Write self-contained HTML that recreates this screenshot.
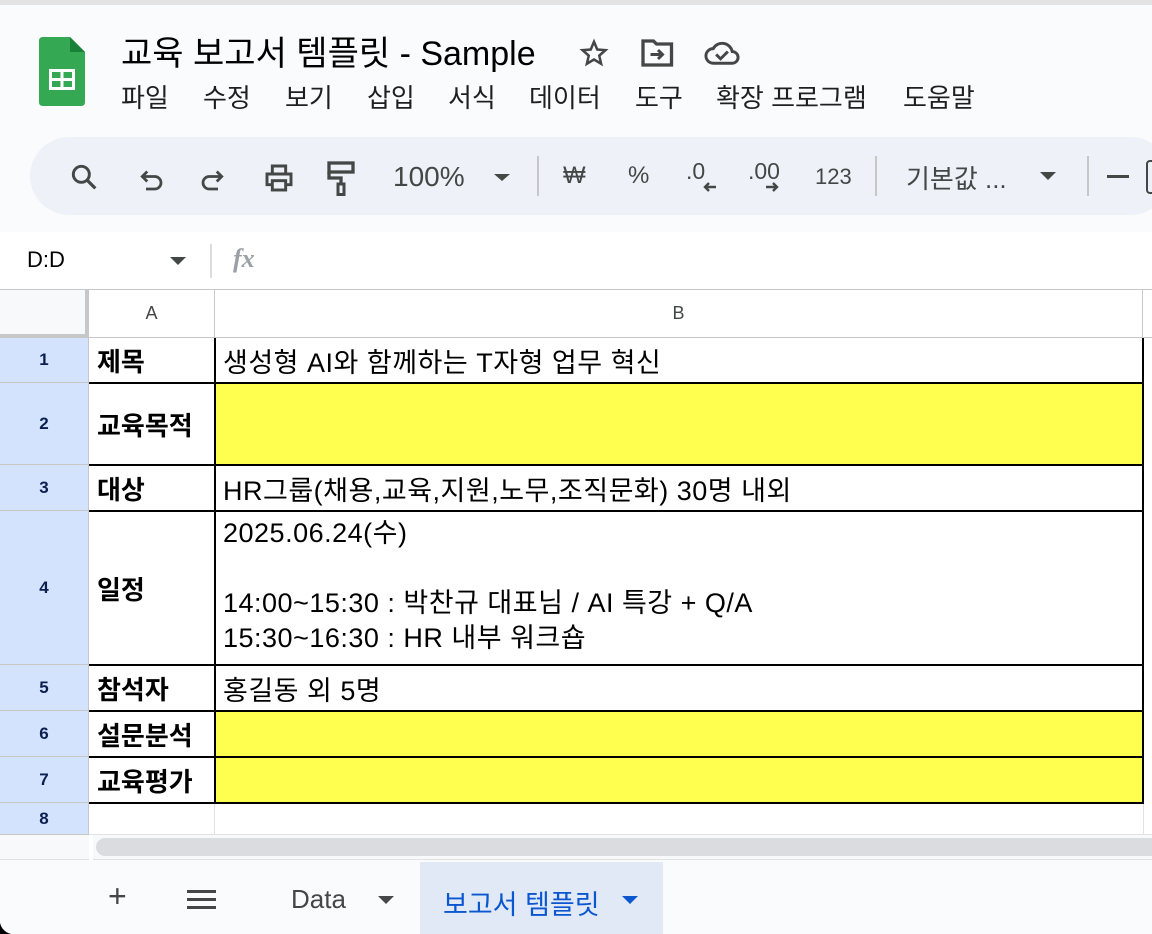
<!DOCTYPE html>
<html><head><meta charset="utf-8"><style>
*{margin:0;padding:0;box-sizing:border-box}
body{width:1152px;height:934px;overflow:hidden;background:#f9fbfd;font-family:"Liberation Sans","Noto Sans CJK KR",sans-serif;position:relative;color:#1f1f1f}
.a{position:absolute;white-space:nowrap}
.menu span{position:absolute;white-space:nowrap}
.t{font-size:24px;color:#444746}
.cell{position:absolute;font-size:27px;color:#000;display:flex;align-items:center;padding-left:8px;white-space:nowrap;letter-spacing:0.5px}
.rh{position:absolute;left:0;width:89px;background:#d3e3fd;color:#0b1f4f;font-weight:bold;font-size:17px;display:flex;align-items:center;justify-content:center;border-bottom:1px solid #c7c7c7;border-right:1px solid #c7c7c7}
.b{font-weight:bold;font-size:26px;letter-spacing:0}
</style></head><body>
<div class="a" style="left:0;top:0;width:1152px;height:5px;background:#e3e3e3"></div>
<svg class="a" style="left:39px;top:37px" width="46" height="70" viewBox="0 0 46 70"><path d="M4 0H31L46 15V65Q46 69 42 69H4Q0 69 0 65V4Q0 0 4 0Z" fill="#34a853"/><path d="M31 0V15H46Z" fill="#188038"/><rect x="10" y="32" width="26" height="21" fill="#fff"/><rect x="13" y="35" width="8.5" height="6" fill="#34a853"/><rect x="24.5" y="35" width="8.5" height="6" fill="#34a853"/><rect x="13" y="44" width="8.5" height="6" fill="#34a853"/><rect x="24.5" y="44" width="8.5" height="6" fill="#34a853"/></svg>
<div class="a" style="left:121px;top:26px;font-size:34px;color:#000">교육 보고서 템플릿 - Sample</div>
<svg class="a" style="left:578px;top:38px" width="32" height="30" viewBox="0 0 24 24"><path d="M12 3l2.6 6.2 6.6.5-5 4.4 1.5 6.5L12 17.2 6.3 20.6l1.5-6.5-5-4.4 6.6-.5z" fill="none" stroke="#444746" stroke-width="2"/></svg>
<svg class="a" style="left:640px;top:38px" width="36" height="30" viewBox="0 0 24 20"><path d="M2 2h7l2 2h10v14H2z" fill="none" stroke="#444746" stroke-width="2.2"/><path d="M7 11h8M12 8l3 3-3 3" fill="none" stroke="#444746" stroke-width="2"/></svg>
<svg class="a" style="left:703px;top:38px" width="38" height="30" viewBox="0 0 26 20"><path d="M7 17h13a4 4 0 0 0 0-8 7 7 0 0 0-13-2 5 5 0 0 0 0 10z" fill="none" stroke="#444746" stroke-width="2"/><path d="M9 11l3 3 5-5" fill="none" stroke="#444746" stroke-width="2"/></svg>
<div class="a menu" style="left:121px;top:78px;font-size:26px;color:#1f1f1f">
<span style="left:0">파일</span><span style="left:82px">수정</span><span style="left:164px">보기</span><span style="left:246px">삽입</span><span style="left:327px">서식</span><span style="left:408px">데이터</span><span style="left:514px">도구</span><span style="left:595px">확장 프로그램</span><span style="left:782px">도움말</span></div>
<div class="a" style="left:30px;top:137px;width:1140px;height:78px;background:#eef2f8;border-radius:39px"></div>
<svg class="a" style="left:68px;top:161px" width="32" height="32" viewBox="0 0 24 24"><circle cx="10" cy="10" r="6" fill="none" stroke="#444746" stroke-width="2.2"/><path d="M14.5 14.5l6 6" stroke="#444746" stroke-width="2.4"/></svg>
<svg class="a" style="left:136px;top:164px" width="30" height="30" viewBox="0 0 24 24"><path d="M6 10h9a5 5 0 0 1 0 10H8" fill="none" stroke="#444746" stroke-width="2.2"/><path d="M9 6l-4 4 4 4" fill="none" stroke="#444746" stroke-width="2.2"/></svg>
<svg class="a" style="left:198px;top:164px" width="30" height="30" viewBox="0 0 24 24"><path d="M18 10H9a5 5 0 0 0 0 10h7" fill="none" stroke="#444746" stroke-width="2.2"/><path d="M15 6l4 4-4 4" fill="none" stroke="#444746" stroke-width="2.2"/></svg>
<svg class="a" style="left:262px;top:162px" width="34" height="32" viewBox="0 0 24 24"><path d="M7 8V3h10v5M7 17H3V9h18v8h-4" fill="none" stroke="#444746" stroke-width="2.2"/><rect x="7" y="14" width="10" height="7" fill="none" stroke="#444746" stroke-width="2.2"/></svg>
<svg class="a" style="left:326px;top:160px" width="30" height="36" viewBox="0 0 20 24"><rect x="2" y="2" width="16" height="6" fill="none" stroke="#444746" stroke-width="2.2"/><path d="M2 8v4h8v4" fill="none" stroke="#444746" stroke-width="2.2"/><rect x="8" y="16" width="4" height="7" fill="none" stroke="#444746" stroke-width="2"/></svg>
<div class="a t" style="left:393px;top:161px;font-size:28px">100%</div>
<div class="a" style="left:494px;top:174px;border-left:8px solid transparent;border-right:8px solid transparent;border-top:7px solid #444746"></div>
<div class="a" style="left:537px;top:156px;width:2px;height:40px;background:#c7c7c7"></div>
<div class="a t" style="left:563px;top:162px">₩</div>
<div class="a t" style="left:628px;top:162px">%</div>
<div class="a t" style="left:686px;top:158px;font-size:23px">.0</div>
<svg class="a" style="left:703px;top:181px" width="14" height="12" viewBox="0 0 14 12"><path d="M13 6H3M6 2L2 6l4 4" fill="none" stroke="#444746" stroke-width="2.4"/></svg>
<div class="a t" style="left:748px;top:158px;font-size:23px">.00</div>
<svg class="a" style="left:765px;top:181px" width="14" height="12" viewBox="0 0 14 12"><path d="M1 6h10M8 2l4 4-4 4" fill="none" stroke="#444746" stroke-width="2.4"/></svg>
<div class="a t" style="left:815px;top:164px;font-size:22px">123</div>
<div class="a" style="left:875px;top:156px;width:2px;height:40px;background:#c7c7c7"></div>
<div class="a t" style="left:906px;top:159px;font-size:26px">기본값 ...</div>
<div class="a" style="left:1040px;top:172px;border-left:8px solid transparent;border-right:8px solid transparent;border-top:8px solid #444746"></div>
<div class="a" style="left:1087px;top:156px;width:2px;height:40px;background:#c7c7c7"></div>
<div class="a" style="left:1107px;top:175px;width:22px;height:3px;background:#444746"></div>
<div class="a" style="left:1146px;top:160px;width:10px;height:34px;border:2px solid #444746;border-radius:4px"></div>
<div class="a" style="left:0;top:232px;width:1152px;height:58px;background:#fff;border-bottom:1px solid #c7c7c7"></div>
<div class="a" style="left:27px;top:247px;font-size:22px;color:#000">D:D</div>
<div class="a" style="left:170px;top:257px;border-left:8px solid transparent;border-right:8px solid transparent;border-top:8px solid #444746"></div>
<div class="a" style="left:210px;top:244px;width:2px;height:34px;background:#dadce0"></div>
<div class="a" style="left:233px;top:244px;font-size:26px;color:#9aa0a6;font-style:italic;font-weight:bold;font-family:'Liberation Serif',serif">fx</div>
<div class="a" style="left:0;top:290px;width:1152px;height:570px;background:#fff"></div>
<div class="a" style="left:0;top:290px;width:89px;height:48px;background:#f8f9fa;border-right:4px solid #c7c7c7;border-bottom:4px solid #c7c7c7"></div>
<div class="a" style="left:89px;top:290px;width:126px;height:48px;border-right:1px solid #c7c7c7;border-bottom:1px solid #c7c7c7;display:flex;align-items:center;justify-content:center;font-size:18px;color:#444746">A</div>
<div class="a" style="left:215px;top:290px;width:928px;height:48px;border-right:1px solid #c7c7c7;border-bottom:1px solid #c7c7c7;display:flex;align-items:center;justify-content:center;font-size:18px;color:#444746">B</div>
<div class="a" style="left:1143px;top:290px;width:9px;height:48px;border-bottom:1px solid #c7c7c7"></div>
<div class="rh" style="top:338px;height:45px">1</div>
<div class="rh" style="top:383px;height:82px">2</div>
<div class="rh" style="top:465px;height:46px">3</div>
<div class="rh" style="top:511px;height:154px">4</div>
<div class="rh" style="top:665px;height:46px">5</div>
<div class="rh" style="top:711px;height:46px">6</div>
<div class="rh" style="top:757px;height:46px">7</div>
<div class="rh" style="top:803px;height:32px">8</div>
<div class="a" style="left:214px;top:383px;width:930px;height:82px;background:#ffff4f"></div>
<div class="a" style="left:214px;top:711px;width:930px;height:92px;background:#ffff4f"></div>
<div class="a" style="left:89px;top:338px;width:1055px;height:466px;border:2px solid #000;border-top:none;border-left:none"></div>
<div class="a" style="left:214px;top:338px;width:2px;height:466px;background:#000"></div>
<div class="a" style="left:89px;top:382px;width:1055px;height:2px;background:#000"></div>
<div class="a" style="left:89px;top:464px;width:1055px;height:2px;background:#000"></div>
<div class="a" style="left:89px;top:510px;width:1055px;height:2px;background:#000"></div>
<div class="a" style="left:89px;top:664px;width:1055px;height:2px;background:#000"></div>
<div class="a" style="left:89px;top:710px;width:1055px;height:2px;background:#000"></div>
<div class="a" style="left:89px;top:756px;width:1055px;height:2px;background:#000"></div>
<div class="a" style="left:214px;top:804px;width:1px;height:31px;background:#e1e1e1"></div>
<div class="a" style="left:1143px;top:804px;width:1px;height:31px;background:#e1e1e1"></div>
<div class="a" style="left:89px;top:834px;width:1063px;height:1px;background:#e1e1e1"></div>
<div class="cell b" style="left:89px;top:338px;height:45px">제목</div>
<div class="cell b" style="left:89px;top:383px;height:82px">교육목적</div>
<div class="cell b" style="left:89px;top:465px;height:46px">대상</div>
<div class="cell b" style="left:89px;top:511px;height:154px">일정</div>
<div class="cell b" style="left:89px;top:665px;height:46px">참석자</div>
<div class="cell b" style="left:89px;top:711px;height:46px">설문분석</div>
<div class="cell b" style="left:89px;top:757px;height:46px">교육평가</div>
<div class="cell" style="left:215px;top:338px;height:45px">생성형 AI와 함께하는 T자형 업무 혁신</div>
<div class="cell" style="left:215px;top:465px;height:46px">HR그룹(채용,교육,지원,노무,조직문화) 30명 내외</div>
<div class="cell" style="left:215px;top:516px;display:block;line-height:35px">2025.06.24(수)<br><br>14:00~15:30 : 박찬규 대표님 / AI 특강 + Q/A<br>15:30~16:30 : HR 내부 워크숍</div>
<div class="cell" style="left:215px;top:665px;height:46px">홍길동 외 5명</div>
<div class="a" style="left:0;top:835px;width:1152px;height:25px;background:#f8f9fa;border-bottom:1px solid #e1e1e1"></div>
<div class="a" style="left:89px;top:835px;width:4px;height:25px;background:#fff"></div>
<div class="a" style="left:96px;top:838px;width:1070px;height:18px;background:#dadce0;border-radius:9px"></div>
<div class="a" style="left:0;top:861px;width:1152px;height:73px;background:#f9fbfd"></div>
<div class="a" style="left:108px;top:878px;font-size:32px;color:#444746">+</div>
<div class="a" style="left:187px;top:890px;width:29px;height:3px;background:#444746;box-shadow:0 8px 0 #444746,0 16px 0 #444746"></div>
<div class="a" style="left:291px;top:884px;font-size:26px;color:#444746">Data</div>
<div class="a" style="left:378px;top:896px;border-left:8px solid transparent;border-right:8px solid transparent;border-top:8px solid #444746"></div>
<div class="a" style="left:420px;top:862px;width:243px;height:72px;background:#e1e9f7"></div>
<div class="a" style="left:443px;top:883px;font-size:27px;color:#0b57d0">보고서 템플릿</div>
<div class="a" style="left:622px;top:896px;border-left:8px solid transparent;border-right:8px solid transparent;border-top:8px solid #0b57d0"></div>
<div class="a" style="left:0;top:920px;width:14px;height:14px;background:radial-gradient(circle at 14px 0,transparent 14px,#000 14.5px)"></div>
</body></html>
